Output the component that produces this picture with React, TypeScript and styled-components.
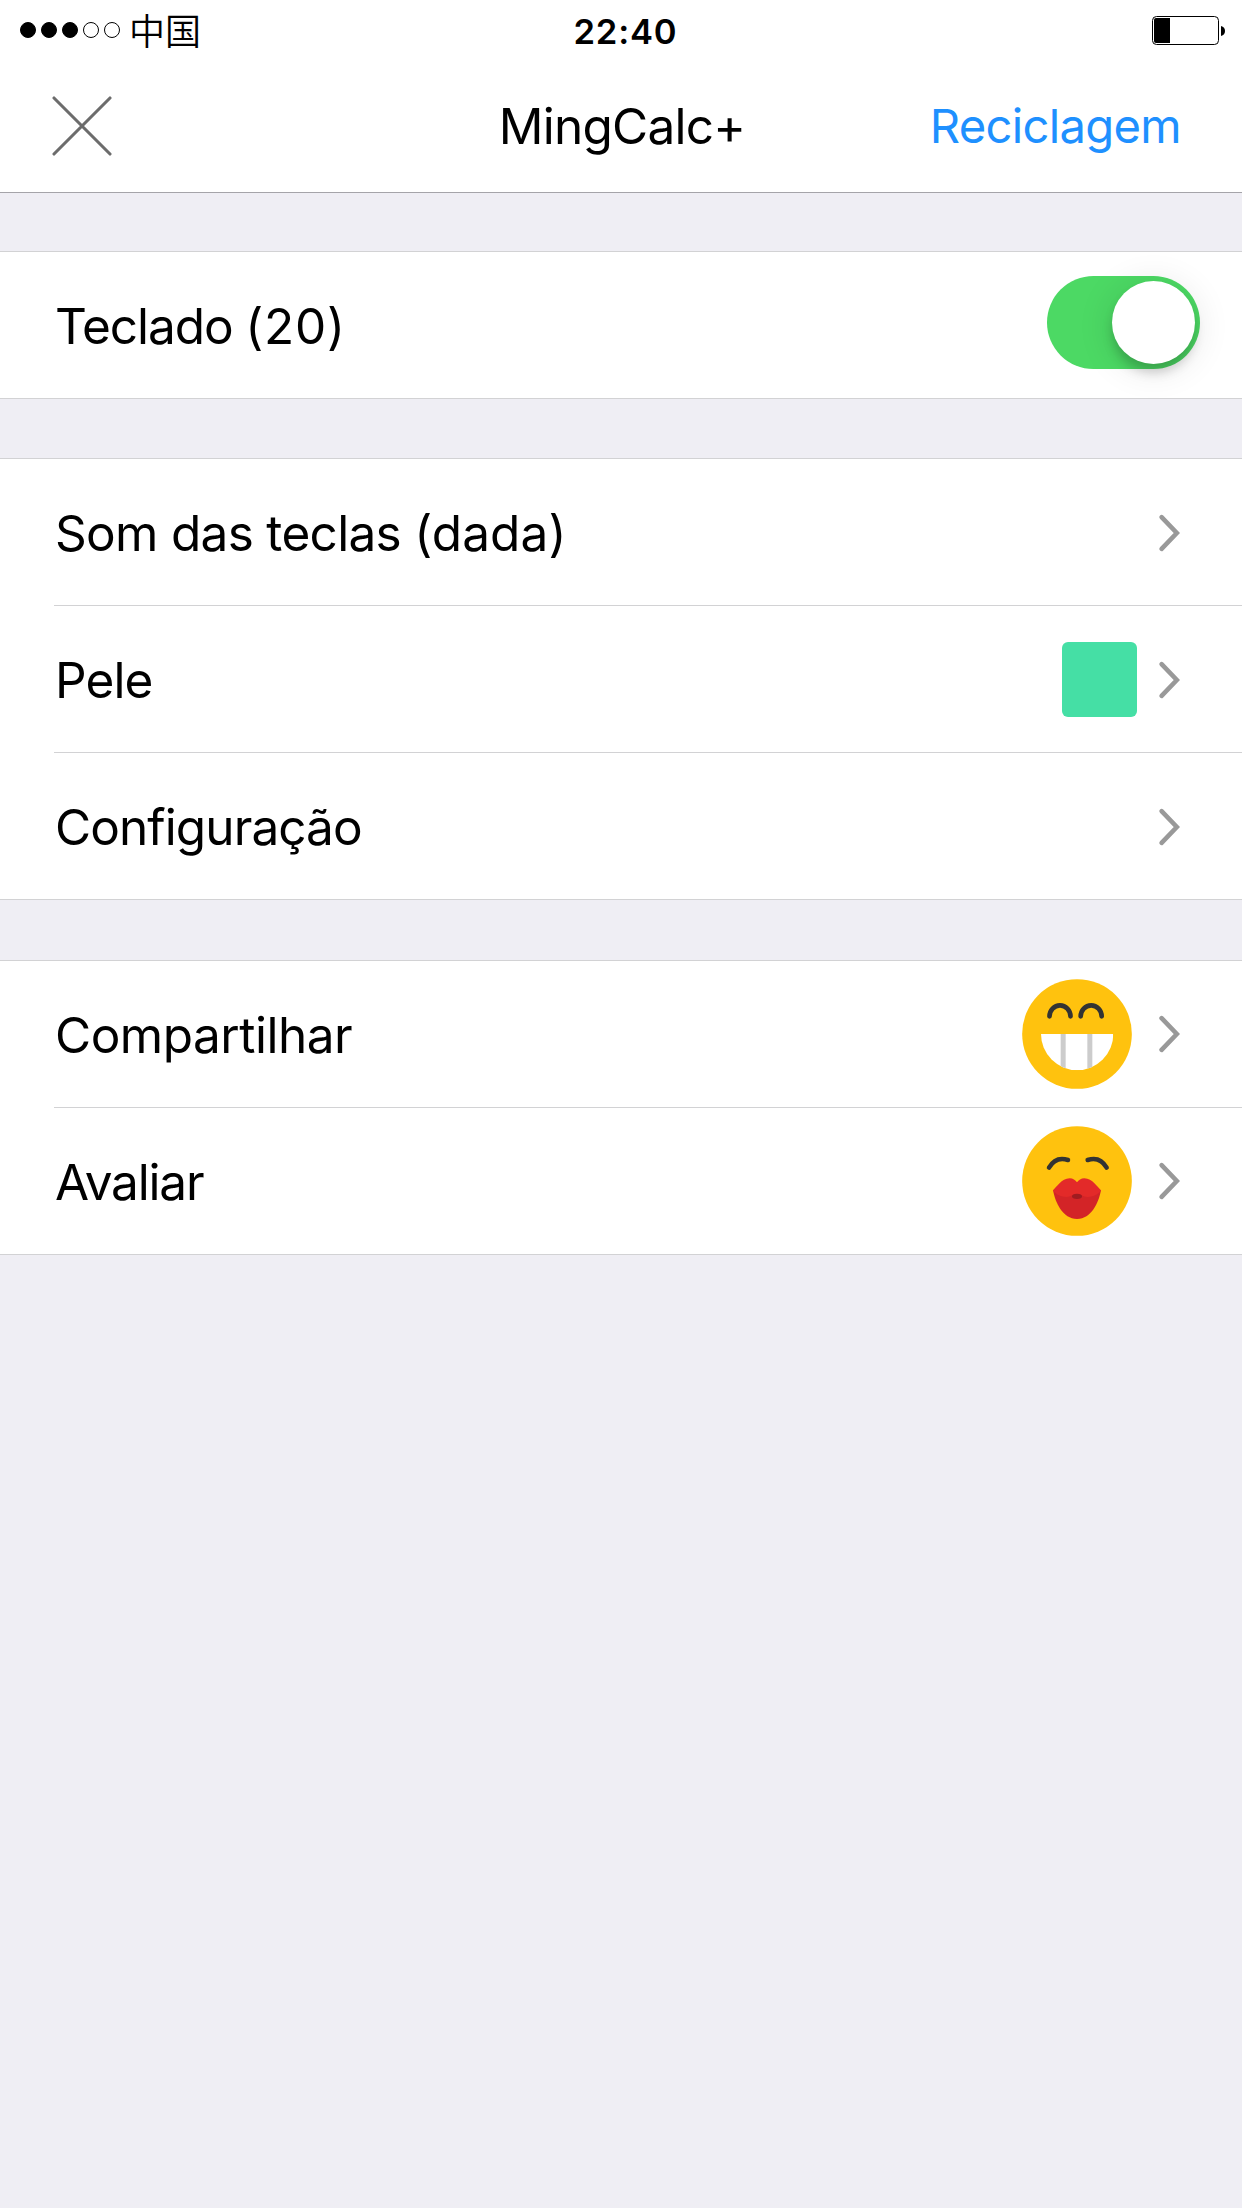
import React, { useState } from "react";
import styled, { createGlobalStyle } from "styled-components";

const GlobalStyle = createGlobalStyle`
  *, *::before, *::after {
    box-sizing: border-box;
  }

  body {
    margin: 0;
    background: #efeef4;
    color: #000;
    font-family: Inter, "Liberation Sans", "Noto Sans CJK SC", sans-serif;
  }
`;

const Screen = styled.div`
  display: flex;
  flex-direction: column;
  width: 1242px;
  min-height: 2208px;
  overflow: hidden;
  background: #efeef4;
`;

const StatusBar = styled.div`
  display: grid;
  grid-template-columns: 1fr auto 1fr;
  align-items: center;
  height: 60px;
  padding: 0 16px 0 20px;
  background: #fff;
`;

const Carrier = styled.div`
  display: flex;
  align-items: center;
`;

const SignalDots = styled.div`
  display: flex;
  gap: 5px;
`;

const SignalDot = styled.span<{ $filled: boolean }>`
  width: 16px;
  height: 16px;
  border: 1px solid #000;
  border-radius: 50%;
  background: ${(p) => (p.$filled ? "#000" : "transparent")};
`;

const CarrierName = styled.span`
  margin-left: 9px;
  padding-bottom: 2px;
  font-family: "Noto Sans CJK SC", sans-serif;
  font-size: 36px;
  font-weight: 350;
  line-height: 50px;
`;

const Clock = styled.time`
  padding: 1px 0 0 5px;
  font-size: 34.6px;
  font-weight: 600;
  letter-spacing: 0.81px;
  line-height: 50px;
`;

const BatteryIcon = styled.svg`
  justify-self: end;
  width: 74px;
  height: 30px;
`;

const NavBar = styled.header`
  display: grid;
  grid-template-columns: 1fr auto 1fr;
  align-items: center;
  height: 133px;
  padding: 0 61px 0 52px;
  border-bottom: 1px solid #a5a4a9;
  background: #fff;
`;

const NavButton = styled.button<{ $align: "start" | "end" }>`
  display: flex;
  justify-self: ${(p) => p.$align};
  padding: 0;
  border: 0;
  background: none;
  color: #1e90ff;
  font-family: inherit;
  font-size: 47.2px;
  letter-spacing: -0.69px;
  line-height: 60px;
`;

const CloseIcon = styled.svg`
  width: 60px;
  height: 60px;
`;

const Title = styled.h1`
  margin: 0;
  padding-left: 11px;
  font-size: 49.5px;
  font-weight: 400;
  letter-spacing: -0.78px;
  line-height: 60px;
`;

const Main = styled.main`
  display: flex;
  flex-direction: column;
  padding-top: 58px;
`;

const Group = styled.section<{ $gap: number }>`
  margin-bottom: ${(p) => p.$gap}px;
  border-top: 1px solid #d2d2d4;
  border-bottom: 1px solid #d2d2d4;
  background: #fff;
`;

const Row = styled.div`
  display: flex;
  align-items: center;
  height: 146px;
  margin-left: 54px;
  padding-right: 60px;

  & + & {
    height: 147px;
    border-top: 1px solid #d2d2d4;
  }
`;

const Label = styled.span<{ $tracking: number }>`
  flex: 1;
  padding: 2px 0 0 1px;
  font-size: 49.5px;
  letter-spacing: ${(p) => p.$tracking}px;
  line-height: 60px;
  white-space: nowrap;
`;

const LabelDetail = styled.span<{ $tracking: number }>`
  letter-spacing: ${(p) => p.$tracking}px;
`;

const Toggle = styled.button<{ $on: boolean }>`
  display: flex;
  align-items: center;
  justify-content: ${(p) => (p.$on ? "flex-end" : "flex-start")};
  width: 153px;
  height: 93px;
  margin: 0 -18px 5px 0;
  padding: 0 5px;
  border: 0;
  border-radius: 47px;
  background: ${(p) => (p.$on ? "#4cd964" : "#e5e5ea")};
`;

const Knob = styled.span`
  width: 83px;
  height: 83px;
  border-radius: 50%;
  background: #fff;
  box-shadow: 0 9px 12px -1px rgba(0, 0, 0, 0.2), 0 4px 34px 4px rgba(0, 0, 0, 0.09);
`;

const Swatch = styled.span`
  width: 75px;
  height: 75px;
  margin-right: 21px;
  border-radius: 6px;
  background: #45dfa5;
`;

const Face = styled.svg`
  width: 110px;
  height: 110px;
  margin-right: 26px;
`;

const ChevronIcon = styled.svg<{ $drop: number }>`
  width: 24px;
  height: 40px;
  margin-top: ${(p) => p.$drop}px;
`;

const Close = () => (
  <CloseIcon viewBox="0 0 60 60" fill="none" stroke="#6c6c6c" strokeWidth="3.1" strokeLinecap="round">
    <path d="M2 2 L58 58 M58 2 L2 58" />
  </CloseIcon>
);

const Battery = () => (
  <BatteryIcon viewBox="0 0 74 30">
    <rect x="0.5" y="1.5" width="66" height="28" rx="4" fill="none" stroke="#000" />
    <path d="M4 3 H18 V28 H4 Q2 28 2 26 V5 Q2 3 4 3 Z" />
    <path d="M69 11 Q73 12 73 16 Q73 20 69 21 Z" />
  </BatteryIcon>
);

const Chevron = ({ drop = 0 }: { drop?: number }) => (
  <ChevronIcon $drop={drop} viewBox="0 0 24 40" fill="none" stroke="#999" strokeWidth="4.6" strokeLinecap="round">
    <path d="M3.6 4.2 L18.8 20 L3.6 35.8" />
  </ChevronIcon>
);

const GrinFace = () => (
  <Face viewBox="0 0 330 330">
    <defs>
      <clipPath id="grin">
        <path d="M57 165 H274 A108.5 108.5 0 0 1 57 165 Z" />
      </clipPath>
    </defs>
    <circle cx="165" cy="165" r="164.5" fill="#ffc20e" />
    <g clipPath="url(#grin)">
      <rect x="57" y="165" width="217" height="109" fill="#fff" />
      <rect x="116" y="165" width="15" height="109" fill="#ccc" />
      <rect x="196" y="165" width="15" height="109" fill="#ccc" />
    </g>
    <g fill="none" stroke="#333" strokeWidth="14" strokeLinecap="round">
      <path d="M82.5 112 A31.5 33 0 0 1 145.5 112" />
      <path d="M176 112 A31.5 33 0 0 1 239 112" />
    </g>
  </Face>
);

const KissFace = () => (
  <Face viewBox="0 0 330 330">
    <circle cx="165" cy="165" r="164.5" fill="#ffc20e" />
    <g fill="none" stroke="#333" strokeWidth="13.5" strokeLinecap="round">
      <path d="M81 125 Q101 90 138 102" />
      <path d="M197 102 Q234 90 254 125" />
    </g>
    <path
      d="M93 193 C100 230 122 279 165 279 C208 279 230 230 237 193 L165 180 Z"
      fill="#d32427"
    />
    <path
      d="M93 193 C104 184 118 157 143 157 C153 157 160 162 165 169 C170 162 177 157 187 157 C212 157 226 184 237 193 C227 207 212 213 197 213 C184 213 177 205 165 205 C153 205 146 213 133 213 C118 213 103 207 93 193 Z"
      fill="#e32a29"
    />
    <ellipse cx="165" cy="211" rx="15" ry="8" fill="#a01c20" />
  </Face>
);

export default function App() {
  const [keyboardOn, setKeyboardOn] = useState(true);

  return (
    <>
      <GlobalStyle />
      <Screen>
        <StatusBar>
          <Carrier>
            <SignalDots>
              {[true, true, true, false, false].map((filled, i) => (
                <SignalDot key={i} $filled={filled} />
              ))}
            </SignalDots>
            <CarrierName>中国</CarrierName>
          </Carrier>
          <Clock>22:40</Clock>
          <Battery />
        </StatusBar>
        <NavBar>
          <NavButton $align="start" aria-label="Fechar">
            <Close />
          </NavButton>
          <Title>MingCalc+</Title>
          <NavButton $align="end">Reciclagem</NavButton>
        </NavBar>
        <Main>
          <Group $gap={59}>
            <Row>
              <Label $tracking={-1.07}>
                Teclado <LabelDetail $tracking={0.7}>(20)</LabelDetail>
              </Label>
              <Toggle
                $on={keyboardOn}
                role="switch"
                aria-checked={keyboardOn}
                aria-label="Teclado"
                onClick={() => setKeyboardOn(!keyboardOn)}
              >
                <Knob />
              </Toggle>
            </Row>
          </Group>
          <Group $gap={60}>
            <Row>
              <Label $tracking={-0.69}>
                Som das teclas <LabelDetail $tracking={0.1}>(dada)</LabelDetail>
              </Label>
              <Chevron drop={2} />
            </Row>
            <Row>
              <Label $tracking={-0.9}>Pele</Label>
              <Swatch />
              <Chevron drop={2} />
            </Row>
            <Row>
              <Label $tracking={-0.91}>Configuração</Label>
              <Chevron drop={2} />
            </Row>
          </Group>
          <Group $gap={0}>
            <Row>
              <Label $tracking={-0.49}>Compartilhar</Label>
              <GrinFace />
              <Chevron />
            </Row>
            <Row>
              <Label $tracking={-1.16}>Avaliar</Label>
              <KissFace />
              <Chevron />
            </Row>
          </Group>
        </Main>
      </Screen>
    </>
  );
}
